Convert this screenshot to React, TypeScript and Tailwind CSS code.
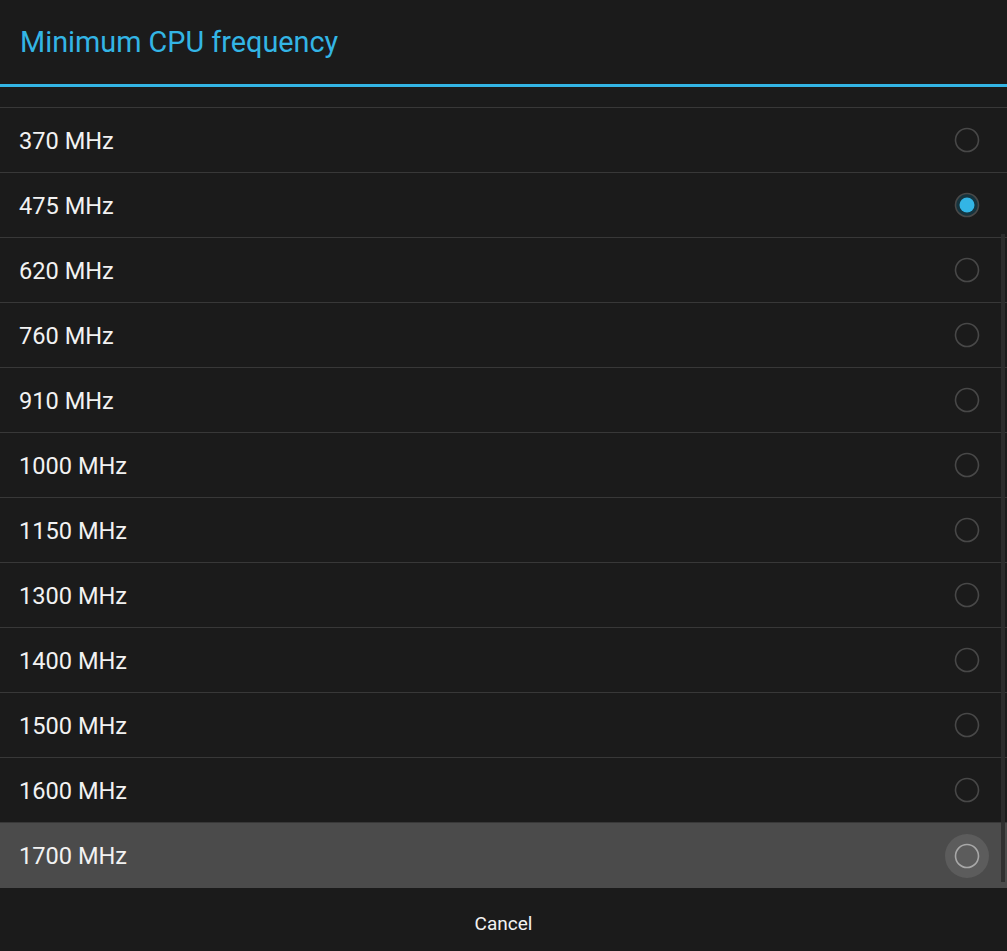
import React from "react";

const items = ["370", "475", "620", "760", "910", "1000", "1150", "1300", "1400", "1500", "1600", "1700"];

function Radio({ selected, pressed }: { selected?: boolean; pressed?: boolean }) {
  return (
    <div className="relative w-[44px] h-[44px] flex items-center justify-center">
      {pressed && <div className="absolute inset-0 rounded-full bg-[#5c5c5c]" />}
      <svg width="26" height="26" viewBox="0 0 26 26" className="relative">
        <circle
          cx="13"
          cy="13"
          r="11.5"
          fill={selected ? "#16343e" : "none"}
          stroke={pressed ? "#a8a8a8" : "#484848"}
          strokeWidth="1.6"
        />
        {selected && <circle cx="13" cy="13" r="7.5" fill="#33b5e5" />}
      </svg>
    </div>
  );
}

export default function App() {
  return (
    <div
      className="w-[1007px] h-[951px] bg-[#1b1b1b] flex flex-col overflow-hidden"
      style={{ fontFamily: "Roboto, 'Noto Sans', sans-serif" }}
    >
      <div className="h-[84px] flex items-center pl-[20px] pt-[2px] text-[#33b5e5] text-[28.8px]">
        Minimum CPU frequency
      </div>
      <div className="h-[3px] bg-[#33b5e5]" />
      <div className="relative flex-1 flex flex-col">
        <div className="h-[21px] border-b border-[#383838]" />
        {items.map((f, i) => {
          const last = i === items.length - 1;
          return (
            <div
              key={f}
              className={`h-[65px] flex items-center justify-between pl-[19px] pr-[18px] ${
                last ? "bg-[#4b4b4b]" : "border-b border-[#383838]"
              }`}
            >
              <span className="text-[23.6px] text-[#f2f2f2] pt-[3px]">{f} MHz</span>
              <Radio selected={f === "475"} pressed={last} />
            </div>
          );
        })}
        <div className="absolute right-[2px] top-[147px] w-[4px] h-[648px] bg-[#2d2d2d] opacity-90" />
      </div>
      <div className="h-[63px] flex items-center justify-center pt-[10px] text-[19px] text-[#f2f2f2]">Cancel</div>
    </div>
  );
}
